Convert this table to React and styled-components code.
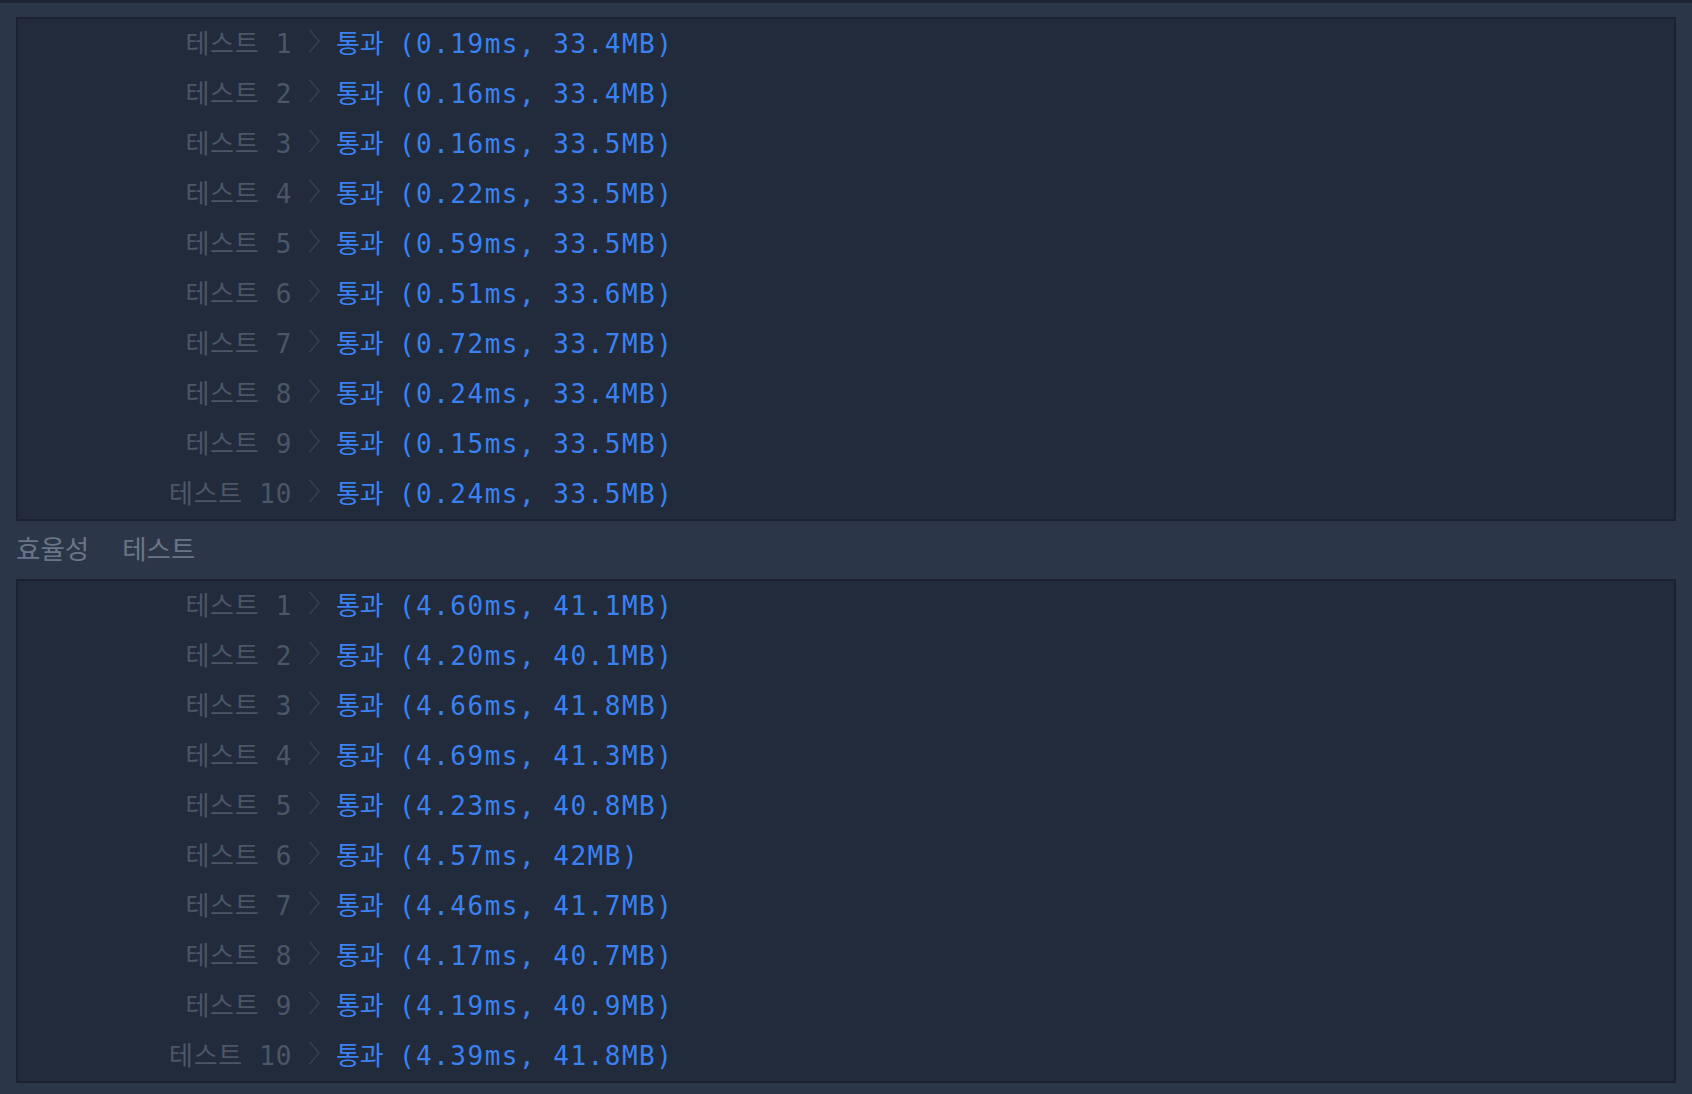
import React from 'react';
import styled, { createGlobalStyle } from 'styled-components';

const GlobalStyle = createGlobalStyle`
  html, body {
    margin: 0;
    padding: 0;
    background: #2b3748;
  }
`;

const Page = styled.div`
  min-height: 1094px;
  box-sizing: border-box;
  background: #2b3748;
  border-top: 3px solid #1e2431;
  padding: 14px 16px 11px;
  font-family: "DejaVu Sans Mono", "Noto Sans CJK KR", monospace;
`;

const Panel = styled.div`
  background: #222b3b;
  border: 2px solid #1b2130;
`;

const Row = styled.div`
  display: flex;
  align-items: center;
  box-sizing: border-box;
  height: 50px;
  padding-bottom: 6px;
  font-size: 26px;
  letter-spacing: 1.1px;
  white-space: pre;
`;

const Label = styled.span`
  flex: none;
  width: 274px;
  text-align: right;
  letter-spacing: 0.7px;
  color: #4b5667;
`;

const ChevronBox = styled.span`
  flex: none;
  display: flex;
  align-items: center;
  justify-content: center;
  width: 44px;
`;

const Result = styled.span`
  color: #3a82f2;
`;

const Status = styled.span`
  letter-spacing: -0.2px;
`;

const Detail = styled.span`
  letter-spacing: 1.5px;
`;

const SectionTitle = styled.div`
  display: flex;
  align-items: center;
  gap: 33px;
  box-sizing: border-box;
  height: 58px;
  padding-bottom: 6px;
  font-family: "Noto Sans CJK KR", sans-serif;
  font-size: 26.5px;
  color: #6a7687;
`;

const Chevron = () => (
  <svg width="13" height="24" viewBox="0 0 13 24" aria-hidden="true">
    <polyline points="1.5,1 11,12 1.5,23" fill="none" stroke="#353f50" strokeWidth="1.6" />
  </svg>
);

const accuracy = [
  ['0.19ms', '33.4MB'],
  ['0.16ms', '33.4MB'],
  ['0.16ms', '33.5MB'],
  ['0.22ms', '33.5MB'],
  ['0.59ms', '33.5MB'],
  ['0.51ms', '33.6MB'],
  ['0.72ms', '33.7MB'],
  ['0.24ms', '33.4MB'],
  ['0.15ms', '33.5MB'],
  ['0.24ms', '33.5MB'],
];

const efficiency = [
  ['4.60ms', '41.1MB'],
  ['4.20ms', '40.1MB'],
  ['4.66ms', '41.8MB'],
  ['4.69ms', '41.3MB'],
  ['4.23ms', '40.8MB'],
  ['4.57ms', '42MB'],
  ['4.46ms', '41.7MB'],
  ['4.17ms', '40.7MB'],
  ['4.19ms', '40.9MB'],
  ['4.39ms', '41.8MB'],
];

const ResultPanel = ({ rows }) => (
  <Panel>
    {rows.map(([time, mem], i) => (
      <Row key={i}>
        <Label>{`테스트 ${i + 1}`}</Label>
        <ChevronBox>
          <Chevron />
        </ChevronBox>
        <Result>
          <Status>{'통과 '}</Status>
          <Detail>{`(${time}, ${mem})`}</Detail>
        </Result>
      </Row>
    ))}
  </Panel>
);

export default function App() {
  return (
    <>
      <GlobalStyle />
      <Page>
        <ResultPanel rows={accuracy} />
        <SectionTitle>
          <span>효율성</span>
          <span>테스트</span>
        </SectionTitle>
        <ResultPanel rows={efficiency} />
      </Page>
    </>
  );
}
